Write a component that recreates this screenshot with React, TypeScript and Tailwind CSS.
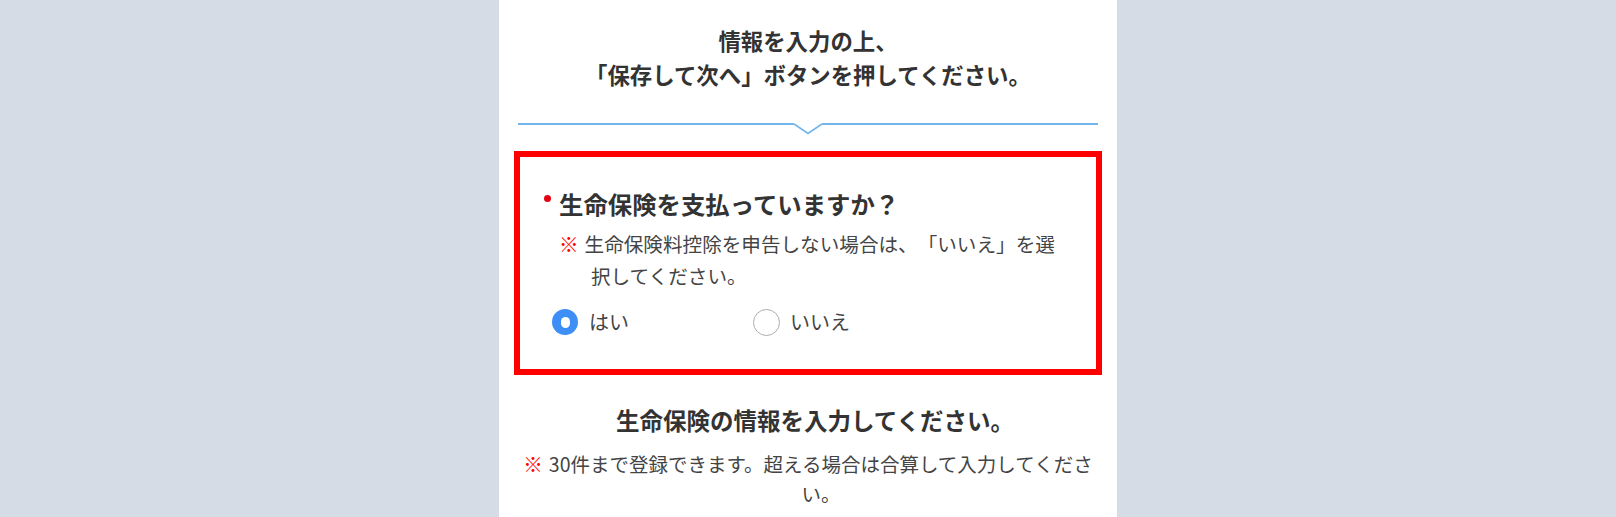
import React from "react";

const font = { fontFamily: '"Noto Sans CJK JP", "Noto Sans", sans-serif' };

function Divider() {
  return (
    <div className="flex items-start h-[12px] mx-[19px]">
      <div className="flex-1 h-[2px] bg-[#74b6ea]" />
      <svg width="28" height="12" viewBox="0 0 28 12" className="block">
        <polyline points="0,1 14,10.5 28,1" fill="none" stroke="#74b6ea" strokeWidth="1.8" />
      </svg>
      <div className="flex-1 h-[2px] bg-[#74b6ea]" />
    </div>
  );
}

export default function App() {
  return (
    <div className="min-h-[517px] h-[517px] overflow-hidden bg-[#d5dce6] flex justify-center [text-spacing-trim:space-all]" style={font}>
      <div className="w-[618px] bg-white pt-[23px] text-[#333]">
        <h1 className="text-center text-[22.4px] font-bold leading-[34px] text-[#333]">
          情報を入力の上、
          <br />
          「保存して次へ」ボタンを押してください。
        </h1>

        <div className="mt-[32px]">
          <Divider />
        </div>

        <div className="mx-[15px] mt-[16px] border-[6px] border-[#ff0000]">
          <div className="pt-[31px] pb-[31px] pl-[32px] pr-[20px]">
            <div className="pl-[7px]">
              <div className="relative text-[24.4px] font-bold leading-[32px] text-[#333] whitespace-nowrap">
                <span className="absolute left-[-15px] top-[7px] w-[7px] h-[7px] rounded-full bg-[#e60012]" />
                生命保険を支払っていますか？
              </div>
              <p className="mt-[8px] text-[19.6px] leading-[32px] text-[#444] pl-[32px] -indent-[32px] whitespace-nowrap">
                <span className="text-[#ff0000]">※</span>
                <span className="inline-block w-[6px]" />
                生命保険料控除を申告しない場合は、「いいえ」を選
                <br />
                択してください。
              </p>
            </div>
            <div className="mt-[14px] flex items-center h-[32px]">
              <label className="w-[201px] flex items-center gap-[11px]">
                <span className="w-[26px] h-[26px] rounded-full bg-[#3d8ef5] flex items-center justify-center">
                  <span className="w-[9px] h-[11px] rounded-full bg-white" />
                </span>
                <span className="text-[20px] leading-[32px] text-[#444]">はい</span>
              </label>
              <label className="flex items-center gap-[10px]">
                <span className="w-[27px] h-[27px] rounded-full border-[1.5px] border-[#adadad] bg-white" />
                <span className="text-[20px] leading-[32px] text-[#444]">いいえ</span>
              </label>
            </div>
          </div>
        </div>

        <h2 className="mt-[29px] pl-[14px] text-center text-[23.5px] font-bold leading-[32px] text-[#333]">
          生命保険の情報を入力してください。
        </h2>
        <div className="mt-[13px] text-center text-[19.5px] leading-[30px] text-[#444] whitespace-nowrap">
          <div>
            <span className="text-[#ff0000]">※</span>
            <span className="inline-block w-[6px]" />
            30件まで登録できます。超える場合は合算して入力してくださ
          </div>
          <div className="pl-[26px]">い。</div>
        </div>
      </div>
    </div>
  );
}
